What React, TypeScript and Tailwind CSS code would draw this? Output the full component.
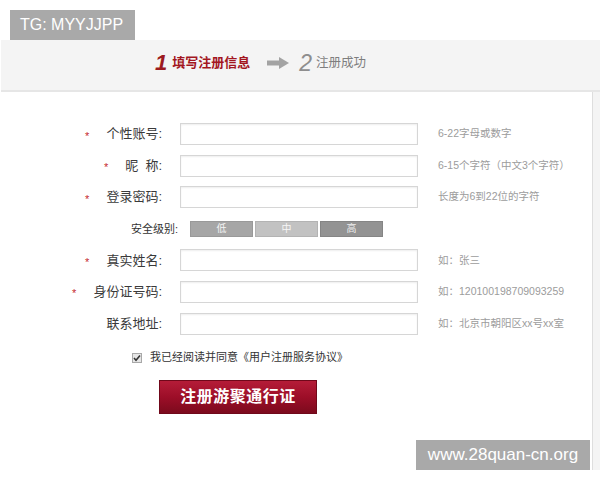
import React from "react";

const rows: { label: string; star: boolean; hint: string }[] = [
  { label: "个性账号:", star: true, hint: "6-22字母或数字" },
  { label: "昵  称:", star: true, hint: "6-15个字符（中文3个字符）" },
  { label: "登录密码:", star: true, hint: "长度为6到22位的字符" },
];
const rows2: { label: string; star: boolean; hint: string }[] = [
  { label: "真实姓名:", star: true, hint: "如：张三" },
  { label: "身份证号码:", star: true, hint: "如：120100198709093259" },
  { label: "联系地址:", star: false, hint: "如：北京市朝阳区xx号xx室" },
];

function Row({ label, star, hint }: { label: string; star: boolean; hint: string }) {
  return (
    <div className="flex items-center h-[22px]">
      <div className="w-[161px] flex justify-end items-center text-[13px] text-[#3a3a3a]">
        {star && <span className="text-[#c62a30] text-[11px] leading-none mr-[17px] mt-[4px]">*</span>}
        <span className="whitespace-pre">{label}</span>
      </div>
      <div className="ml-[18px] w-[238px] h-[22px] border border-[#d6d6d6] bg-white shadow-[inset_0_1px_2px_rgba(0,0,0,0.07)]" />
      <div className="ml-[20px] w-[150px] whitespace-nowrap text-[10.5px] text-[#9c9c9c]">{hint}</div>
    </div>
  );
}

export default function App() {
  return (
    <div
      className="relative w-[600px] h-[480px] bg-white overflow-hidden"
      style={{ fontFamily: "'Liberation Sans','Noto Sans CJK SC',sans-serif" }}
    >
      <div className="pt-[40px] pl-px">
        <div className="bg-[#f4f4f4] h-[430px] flex flex-col">
          {/* header */}
          <div className="h-[52px] border-b-2 border-[#e6e6e6]">
            <div className="h-[46px] flex items-center pl-[154px]">
              <span className="italic font-bold text-[22px] text-[#9c1a20] leading-none">1</span>
              <span className="ml-[5px] text-[13px] font-bold text-[#a3161f]">填写注册信息</span>
              <svg className="ml-[17px]" width="22" height="12" viewBox="0 0 22 12">
                <rect x="0" y="3.5" width="13" height="5" fill="#a3a3a3" />
                <polygon points="12,0 22,6 12,12" fill="#a3a3a3" />
              </svg>
              <span className="ml-[10px] italic text-[23px] text-[#8e8e8e] leading-none">2</span>
              <span className="ml-[4px] text-[12.5px] text-[#7e7e7e]">注册成功</span>
            </div>
          </div>
          {/* content */}
          <div className="flex flex-1">
            <div className="flex-1 bg-white border-r border-[#dedede] pt-[31px]">
              <div className="flex flex-col gap-[9.6px]">
                {rows.map((r) => (
                  <Row key={r.label} {...r} />
                ))}
                <div className="flex items-center h-[22px]">
                  <div className="w-[177px] text-right text-[11px] text-[#333]">安全级别:</div>
                  <div className="ml-[12px] flex gap-[2px]">
                    <div className="w-[63px] h-[16px] bg-[#a6a6a6] border border-[#999] flex items-center justify-center text-[10px] text-[#f4f4f4]">低</div>
                    <div className="w-[63px] h-[16px] bg-[#c2c2c2] border border-[#b3b3b3] flex items-center justify-center text-[10px] text-[#f6f6f6]">中</div>
                    <div className="w-[63px] h-[16px] bg-[#939393] border border-[#858585] flex items-center justify-center text-[10px] text-[#eeeeee]">高</div>
                  </div>
                </div>
                {rows2.map((r) => (
                  <Row key={r.label} {...r} />
                ))}
              </div>
              <div className="mt-[16px] flex items-center pl-[131px] h-[14px]">
                <svg width="10" height="10" viewBox="0 0 10 10">
                  <rect x="0.5" y="0.5" width="9" height="9" fill="#e6e6e6" stroke="#a8a8a8" />
                  <path d="M2 5 L4 7.2 L8 2.5" fill="none" stroke="#333" strokeWidth="1.6" />
                </svg>
                <span className="ml-[8px] text-[11px] text-[#333] whitespace-nowrap">我已经阅读并同意《用户注册服务协议》</span>
              </div>
              <div className="mt-[15px] ml-[158px] w-[158px] h-[34px] bg-gradient-to-b from-[#b51c38] via-[#9d0e28] to-[#7c0a1d] border border-[#70081a] flex items-center justify-center">
                <span className="text-white font-bold text-[16px] tracking-[0.5px]">注册游聚通行证</span>
              </div>
            </div>
            <div className="w-[7px]" />
          </div>
        </div>
      </div>

      {/* watermarks */}
      <div className="absolute left-[10px] top-[10px] w-[125px] h-[30px] bg-[#a9a9a9] flex items-center pl-[10px] text-white text-[16px]">
        TG: MYYJJPP
      </div>
      <div className="absolute left-[416px] top-[440px] w-[174px] h-[30px] bg-[#a9a9a9] flex items-center justify-center text-white text-[17px]">
        www.28quan-cn.org
      </div>
    </div>
  );
}
